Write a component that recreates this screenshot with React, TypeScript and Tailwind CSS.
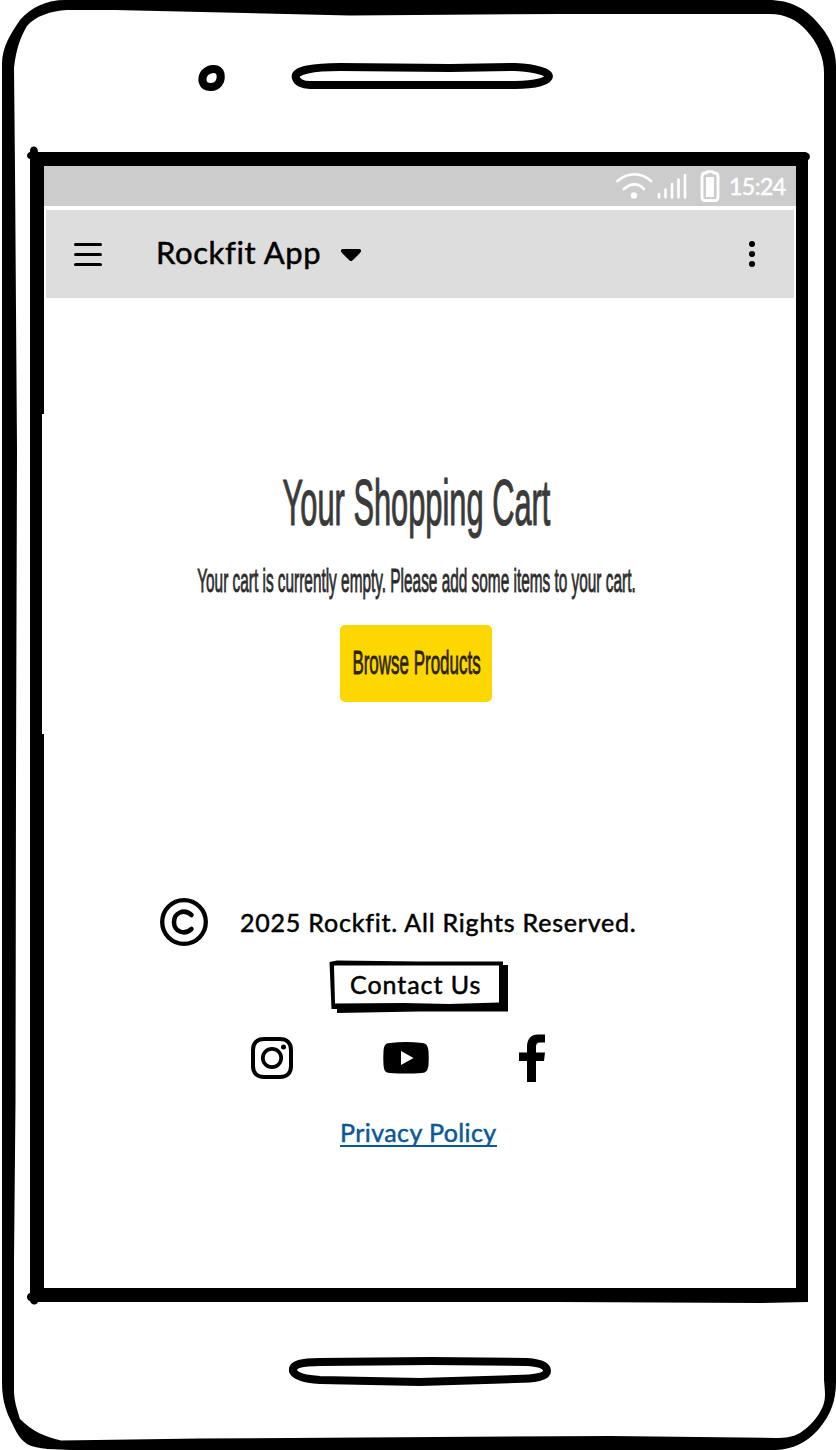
import React from "react";

const hand = "font-[Lato,'Open_Sans',sans-serif] whitespace-nowrap [-webkit-text-stroke:0.5px_currentColor]";
const arial = "font-['Liberation_Sans',Arial,sans-serif] whitespace-nowrap block origin-center";

function PhoneFrame() {
  return (
    <svg className="absolute inset-0 pointer-events-none" width="836" height="1450" viewBox="0 0 836 1450" aria-hidden="true">
      <path
        fillRule="evenodd"
        d="M2 64C2 47 11 33 20 20C31 7 47 0 65 0H768C791 0 806 9 817 22C829 35 836 49 836 66V1382C836 1400 831 1415 818 1430C806 1443 793 1449 776 1450H70C58 1449 37 1450 27 1444C18 1438 15 1429 10 1419C5 1409 2 1397 2 1382Z
        M14 68C16 50 20 38 27 26C35 16 51 11 67 10L115 10L350 15.500L560 14H770C785 14 797 20 806 30C818 43 824 58 824 73V1380C825 1392 826 1398 823 1406C818 1418 809 1427 800 1433C793 1437 786 1438 775 1438L610 1436L200 1438.500L61 1440.500C45 1437 32 1431 20 1419C17 1409 14 1401 14 1390V1260L15.500 1100L16 780L17 450L16 310L15 170Z"
      />
      <path
        fillRule="evenodd"
        d="M30 151C30 145 38 145 38 152H804C811 152 811 159 808 160V1302L760 1303L560 1302L38 1302C36 1306 31 1305 30 1301C26 1300 26 1294 30 1293V159C26 158 26 153 30 152Z
        M44 166V414H42V734H44V1288H796V166Z"
      />
      <g fill="none" stroke="#000" strokeWidth="8">
        <path d="M204.500 73C210 67.500 218.500 67.500 220.500 74C222 82 217 87 211 87C202 87.500 200.500 79 204.500 73Z" />
        <path d="M296 78C293 70 315 67 340 67L450 68L515 67C538 68 549 73 549 76C549 81 536 85 515 85H310C302 85 297 82 296 78Z" />
        <path d="M293 1371C292 1364 302 1362 320 1362L430 1361L527 1362C541 1363 547 1366 547 1371C547 1376 538 1379 515 1379L420 1382L320 1380C303 1379 295 1376 293 1371Z" />
      </g>
    </svg>
  );
}

function StatusBar() {
  return (
    <div className="flex h-10 items-center bg-[#ccc] text-white">
      <svg className="ml-[572px] shrink-0" width="106" height="40" viewBox="0 0 106 40" fill="none" stroke="currentColor" strokeWidth="2.7" strokeLinecap="round">
        <path d="M1.500 15C12 6 25 6 35 15M8 23C15 17 22 17 28 23" />
        <circle cx="18" cy="29.500" r="3.200" fill="currentColor" stroke="none" />
        <path d="M43 28V31.500M49.500 23.500V31.500M56 18V31.500M62.500 13.500V31.500M69 9V31.500" strokeWidth="2.600" />
        <path d="M90 7C91 5 97 5 98 7H99C101 7 102 9 102 11V31C102 33 101 34.500 99 34.500H89C87 34.500 86 33 86 31V11C86 9 87 7 89 7Z" strokeWidth="2.900" />
        <path d="M90 11H98V31H90Z" fill="currentColor" stroke="none" />
      </svg>
      <span className={`ml-[7px] mt-px text-[23px] leading-none tracking-[-0.5px] ${hand}`}>15:24</span>
    </div>
  );
}

function AppBar() {
  return (
    <header className="mx-0.5 mt-1 flex h-[88px] items-center bg-[#ddd]">
      <button type="button" aria-label="Menu" className="ml-[28px] flex h-[23px] w-7 flex-col justify-between">
        <span className="h-[3px] w-full rounded-full bg-black" />
        <span className="h-[3px] w-full rounded-full bg-black" />
        <span className="h-[3px] w-full rounded-full bg-black" />
      </button>
      <h1 className={`-mt-1 ml-[54px] w-[166px] text-[31px] leading-none tracking-[0.6px] ${hand}`}>Rockfit App</h1>
      <svg className="ml-[18px] mt-0.5" width="22" height="14" viewBox="0 0 22 14">
        <path d="M3 1H19C21 1 22 3 20 5L13 12C11.500 13.500 10.500 13.500 9 12L2 5C0 3 1 1 3 1Z" />
      </svg>
      <button type="button" aria-label="More" className="ml-auto mr-[39px] flex flex-col gap-1">
        <span className="size-1.5 rounded-full bg-black" />
        <span className="size-1.5 rounded-full bg-black" />
        <span className="size-1.5 rounded-full bg-black" />
      </button>
    </header>
  );
}

function EmptyCart() {
  return (
    <main className="-ml-2 flex flex-col items-center pt-[170px]">
      <h2 className={`text-[65px] leading-[70px] text-[#3a3a3a] scale-x-[0.474] [-webkit-text-stroke:1.2px_currentColor] ${arial}`}>
        Your Shopping Cart
      </h2>
      <p className={`mt-[25px] text-[33px] leading-9 text-[#2c2c2c] scale-x-[0.466] [-webkit-text-stroke:0.9px_currentColor] ${arial}`}>
        Your cart is currently empty. Please add some items to your cart.
      </p>
      <button type="button" className="mt-[26px] flex h-[77px] w-[152px] items-center justify-center rounded-[5px] bg-[#ffd700] pb-1 text-[#2a2305]">
        <span className={`text-[34px] leading-none scale-x-[0.499] [-webkit-text-stroke:0.8px_currentColor] ${arial}`}>Browse Products</span>
      </button>
    </main>
  );
}

function Footer() {
  return (
    <footer className="mt-[195px] flex flex-col">
      <div className="ml-[115px] flex h-[50px] items-center">
        <svg width="50" height="50" viewBox="0 0 50 50" fill="none" stroke="#000" strokeLinecap="round">
          <circle cx="25" cy="25" r="21.800" strokeWidth="4.300" />
          <path d="M32.500 18C25 11 15 16 15 25C15 34 25 39 32.500 32" strokeWidth="4.500" />
        </svg>
        <p className={`ml-[31px] text-[25px] leading-none tracking-[0.79px] ${hand}`}>2025 Rockfit. All Rights Reserved.</p>
      </div>
      <button type="button" className="relative ml-[285px] mt-[13px] flex h-[54px] w-[180px] items-center pb-[5px] pl-[21px]">
        <svg className="absolute inset-0" width="180" height="54" viewBox="0 0 180 54">
          <path fillRule="evenodd" d="M.5 2L8 .5L90 1.500H174V5H179V51.500H90L8 53V49H2.500ZM5 5.500L6 43.500L75 43L120 44L170 42.500V5.500H5Z" />
        </svg>
        <span className={`text-[25px] leading-none tracking-[0.95px] ${hand}`}>Contact Us</span>
      </button>
      <div className="mt-[18px] flex h-[52px] items-center">
        <svg className="ml-[206px]" width="44" height="44" viewBox="0 0 44 44" fill="none" stroke="#000">
          <path d="M14 3H30C37 3 41 7 41 14V30C41 37 37 41 30 41H14C7 41 3 37 3 30V14C3 7 7 3 14 3Z" strokeWidth="4" />
          <circle cx="22" cy="22" r="9.200" strokeWidth="3.700" />
          <circle cx="33.500" cy="11" r="2.500" fill="#000" stroke="none" />
        </svg>
        <svg className="ml-[88px]" width="48" height="34" viewBox="0 0 48 34">
          <path fillRule="evenodd" d="M8 2Q24 0 40 2C45 2 46 6 46.500 10Q47 17 46.500 24C46 29 44 32 40 32Q24 33 8 32C3 32 2 29 1.500 24Q1 17 1.500 10C2 5 3 2 8 2ZM19 10V24L31.500 17Z" />
        </svg>
        <svg className="ml-[88px]" width="28" height="50" viewBox="0 0 28 50">
          <path d="M9 49V28H1V19.500H9V14C9 6 13 1.500 20 1.500H27V9.500H22C19 9.500 18 11 18 14V19.500H27L26 28H18V49Z" />
        </svg>
      </div>
      <a className={`ml-[296px] mt-[35px] w-[157px] border-b-2 border-[#0b5897] text-[25px] leading-[26px] tracking-[0.42px] text-[#0b5897] ${hand}`}>Privacy Policy</a>
    </footer>
  );
}

export default function App() {
  return (
    <div className="relative h-[1450px] w-[836px] overflow-hidden bg-white pl-11 pt-[166px] text-black">
      <PhoneFrame />
      <div className="relative flex h-[1122px] w-[752px] flex-col">
        <StatusBar />
        <AppBar />
        <EmptyCart />
        <Footer />
      </div>
    </div>
  );
}
